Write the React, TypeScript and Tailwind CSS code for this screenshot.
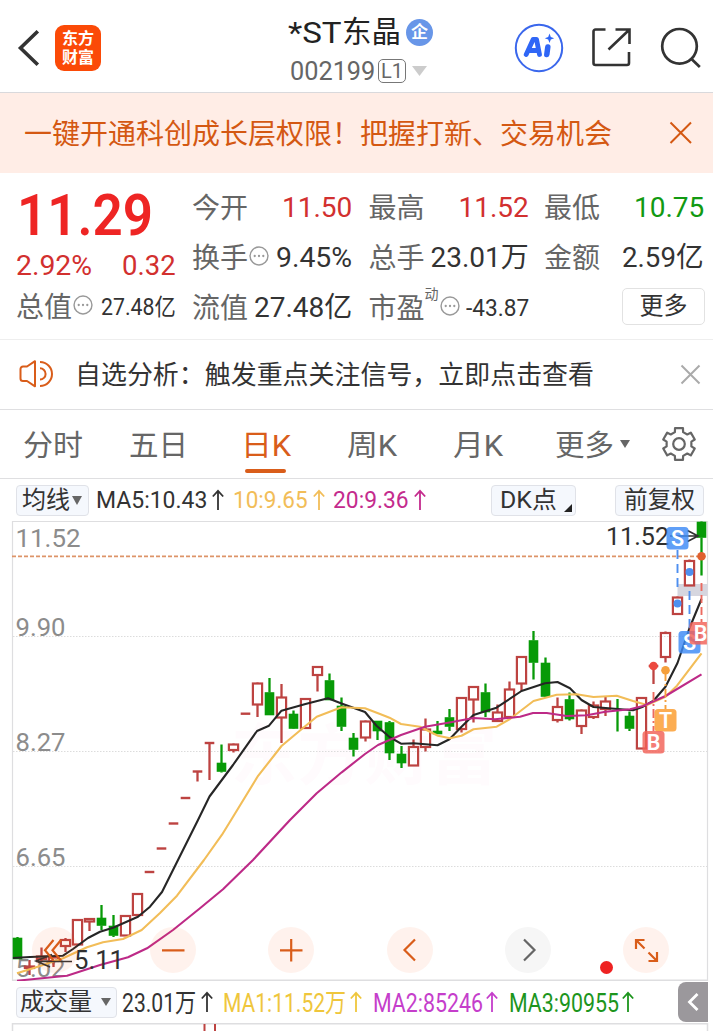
import { useLayoutEffect, useRef, type ReactNode } from "react";

/** Single line of text condensed or stretched to the width of its box. */
function Fit({ className, children }: { className: string; children: ReactNode }) {
  const box = useRef<HTMLDivElement>(null);
  const text = useRef<HTMLSpanElement>(null);
  useLayoutEffect(() => {
    if (!box.current || !text.current) return;
    const scale = box.current.clientWidth / text.current.offsetWidth;
    text.current.style.transform = `scaleX(${scale})`;
  }, []);
  return (
    <div ref={box} className={`flex shrink-0 leading-none whitespace-nowrap ${className}`}>
      <span ref={text} className="inline-block shrink-0 origin-left">
        {children}
      </span>
    </div>
  );
}

function More() {
  return (
    <svg className="mb-[3px] ml-px shrink-0" width="20" height="20" viewBox="0 0 21 21" fill="none">
      <circle cx="10.5" cy="10.5" r="9.4" stroke="#999" strokeWidth="1.5" />
      <circle cx="6" cy="10.5" r="1.2" fill="#999" />
      <circle cx="10.5" cy="10.5" r="1.2" fill="#999" />
      <circle cx="15" cy="10.5" r="1.2" fill="#999" />
    </svg>
  );
}

function Up({ className }: { className: string }) {
  return (
    <svg className={`shrink-0 ${className}`} width="12" height="22" viewBox="0 0 12 22" fill="none" stroke="currentColor" strokeWidth="1.8">
      <path d="M6 21V1.500M0.800 7.500L6 1.800l5.200 5.700" />
    </svg>
  );
}

function Down({ className, w, h }: { className: string; w: number; h: number }) {
  return (
    <svg className={`shrink-0 ${className}`} width={w} height={h} viewBox="0 0 10 8" preserveAspectRatio="none" fill="currentColor">
      <path d="M0 0h10L5 8z" />
    </svg>
  );
}

/** Outline of a six-toothed cog centred on (18, 18). */
const cog = Array.from({ length: 6 }, (_, i) => i * 60 - 90)
  .flatMap((a) => [
    [a - 19, 12.6],
    [a - 14, 16.4],
    [a + 14, 16.4],
    [a + 19, 12.6],
  ])
  .map(([deg, r]) => {
    const t = (deg * Math.PI) / 180;
    return `${(18 + r * Math.cos(t)).toFixed(2)},${(18 + r * Math.sin(t)).toFixed(2)}`;
  })
  .join(" ");

type Candle = [kind: "r" | "g", high: number, top: number, bottom: number, low: number];

const candles: Candle[] = [
  ["g", 937, 938, 959, 959],
  ["r", 960, 966, 968, 975],
  ["r", 947.5, 956, 959, 961],
  ["r", 956, 957, 961, 967],
  ["r", 938, 939.5, 946, 952],
  ["r", 919, 919.5, 944.5, 945],
  ["r", 918, 918.5, 921.5, 931],
  ["g", 905, 918, 925.5, 930],
  ["g", 915, 926, 935.5, 937],
  ["r", 915, 915.5, 935.5, 936],
  ["r", 893, 893.5, 915, 915],
  ["r", 872, 872, 872, 872],
  ["r", 848.5, 848.5, 848.5, 848.5],
  ["r", 823.5, 823.5, 823.5, 823.5],
  ["r", 798, 798, 798, 798],
  ["r", 771, 771.5, 771.5, 781.5],
  ["r", 743, 743, 743, 780],
  ["g", 744.5, 763, 771.5, 772.5],
  ["r", 743.5, 744, 750, 752.5],
  ["r", 713.7, 713.7, 713.7, 713.7],
  ["r", 682.5, 683, 704.5, 717],
  ["g", 678, 692.5, 715, 715],
  ["r", 684, 697, 717.5, 743],
  ["g", 710.5, 714, 728.5, 729],
  ["r", 698, 698.5, 728, 728],
  ["r", 666, 666.5, 675, 691.5],
  ["g", 673.5, 680.5, 700, 700],
  ["g", 697.5, 706, 726.5, 731],
  ["g", 733, 738, 749.5, 756.5],
  ["r", 720.5, 721, 737.5, 741.5],
  ["g", 721, 721, 731, 740],
  ["g", 721, 722.5, 753, 760],
  ["g", 746, 754, 763, 768],
  ["r", 739.5, 746.5, 765.5, 765.5],
  ["r", 718.5, 729, 747, 751.5],
  ["g", 721, 731, 734, 734],
  ["g", 709, 717.5, 726.5, 731],
  ["r", 697, 697.5, 729, 732.5],
  ["r", 686, 686.5, 699.5, 722.5],
  ["g", 683.5, 692.5, 712, 717],
  ["r", 704.5, 712, 721, 722],
  ["r", 681.5, 689, 717, 717],
  ["r", 656, 656.5, 683.5, 691],
  ["g", 631, 640.5, 662.5, 679.5],
  ["g", 657.5, 663, 696.5, 697],
  ["r", 697.5, 706.5, 720, 722.5],
  ["g", 692.5, 699.5, 719, 720.5],
  ["r", 709.5, 710, 726, 734],
  ["r", 701.5, 705, 717, 719],
  ["r", 697, 701, 709, 716],
  ["g", 699, 715, 715, 731.5],
  ["g", 711.5, 716, 728.5, 731],
  ["r", 697, 697.5, 748.5, 749],
  ["r", 666, 666, 666, 684],
  ["r", 631.5, 632.5, 657, 662.5],
  ["r", 596.5, 597, 614, 614.5],
  ["r", 559.5, 560.5, 585.5, 586],
  ["g", 521.5, 522, 537.5, 575.5],
];

const ma5 =
  "13,958 30,957 63,955.7 73,949 88,938 100,931.7 113,927.7 138,916.7 150,906.7 162,892 178,860 198,820 209.5,796.5 233,765 257,731 269,725.7 281.5,710.7 305.5,704 328,698.3 341.5,703.5 365,712 376.5,725.7 389.5,737 401,743.7 413.5,743.3 437.5,745.3 449.5,739.3 461.5,726.7 473.5,715 496.5,707.7 521.5,691 545,683.3 557.5,682 570,688.3 581.5,700 593.5,707 633,710.3 643,706.7 653.5,700.7 665.5,686.7 677.5,663 689.5,628 701.5,599";
const ma10 =
  "17,973.3 40,966 63,958.3 87,947.3 103,942.3 123,939 141.7,930 160,913 177,895.7 204,860 222,834.7 231.7,819 257.5,776.7 281.5,746 303,728 316.7,716.7 341.5,707.3 365,708.3 380,714 389.5,717.7 401,724 420,726.7 430,731.7 438,735.7 450,738.3 461.5,735.7 473.5,729.3 496.7,726.7 510,719 533.5,701 556.7,694.7 576.7,694.3 593.5,697 616.7,695.7 633,701 647,705 665.5,696.7 677,685.7 701.5,653.3";
const ma20 =
  "17,980.7 67,975.7 100,965 128,957.3 147,948.3 173,930 200,908.3 223,889.3 253,860 290,820 316.7,793.3 341.7,772.3 365,754 378,745 401,735 425,726.7 449.5,722.5 473.5,718 495,719.3 520,716.7 533,713 546.7,713 566.7,716 586.7,715.3 605.5,711.7 630,709.3 643,706 665.5,696 701.5,674.3";

const axis: [string, number, number][] = [
  ["11.52", 547, 65],
  ["9.90", 636, 50],
  ["8.27", 751, 50],
  ["6.65", 866, 50],
  ["5.02", 977, 50],
];

function Mark({ x, y, letter, fill }: { x: number; y: number; letter: string; fill: string }) {
  return (
    <g>
      <rect x={x} y={y} width="22" height="22.5" rx="3.5" fill={fill} fillOpacity="0.82" />
      <text x={x + 11} y={y + 18.8} textAnchor="middle" fontSize="21.5" fontWeight="600" fill="#fff">
        {letter}
      </text>
    </g>
  );
}

function KLine() {
  return (
    <svg className="block" width="713" height="461" viewBox="0 520 713 461" fontFamily="Roboto, 'Noto Sans CJK SC', sans-serif">
      <text x="231" y="779" fontSize="66" fontWeight="700" textLength="266" fill="#fffbfd">
        东方财富
      </text>
      <path d="M12.5 981V521.5H707.5V981" fill="none" stroke="#dedee0" strokeWidth="1.2" />
      <path d="M12 980.2H708" stroke="#dedee0" strokeWidth="1.5" />
      <path d="M13 636.5H707M13 751.5H707M13 866.5H707" stroke="#dcdcdc" strokeWidth="1" strokeDasharray="1.5 1.5" />
      <rect x="677.5" y="584" width="30" height="12" fill="#d6d6df" />
      {axis.map(([label, y, w]) => (
        <text key={label} x="15.5" y={y} fontSize="26.5" textLength={w} lengthAdjust="spacingAndGlyphs" fill="#8c8c8c">
          {label}
        </text>
      ))}
      <path d="M12 556.3H702" stroke="#dd9468" strokeWidth="1.8" strokeDasharray="4 2" />
      {candles.map(([kind, high, top, bottom, low], i) => {
        const x = 17.5 + i * 12;
        const color = kind === "r" ? "#bd4341" : "#079a07";
        const flat = bottom - top < 1;
        const thin = kind === "g" && flat;
        return (
          <g key={i} stroke={color} strokeWidth="2.3" fill="none">
            {high < top && <path d={`M${x} ${high}V${top}`} />}
            {low > bottom && <path d={`M${x} ${bottom}V${low}`} />}
            {flat && !thin && <path d={`M${x - 4.8} ${top}h9.6`} strokeWidth="2.4" />}
            {!flat && kind === "r" && (
              <rect x={x - 4.6} y={top + 0.5} width="9.2" height={Math.max(bottom - top - 0.5, 0.5)} strokeWidth="2.2" />
            )}
            {!flat && kind === "g" && <rect x={x - 4.8} y={top - 0.3} width="9.6" height={bottom - top + 0.6} fill={color} stroke="none" />}
          </g>
        );
      })}
      <g fill="none" strokeWidth="2.1" strokeLinejoin="round">
        <polyline points={ma5} stroke="#262626" />
        <polyline points={ma10} stroke="#f2bd58" />
        <polyline points={ma20} stroke="#bd2a87" />
      </g>
      <text x="606" y="545.3" fontSize="26.5" textLength="63" lengthAdjust="spacingAndGlyphs" fill="#303030">
        11.52
      </text>
      <path d="M670 536H698M687.5 530.5L698 536L687.5 541.5" fill="none" stroke="#303030" strokeWidth="1.7" />
      <g fill="none" strokeWidth="1.9">
        <path d="M677.5 550V589" stroke="#4e8ff0" strokeDasharray="9 5" />
        <path d="M689.5 591V631" stroke="#4e8ff0" strokeDasharray="9 5" />
        <path d="M701.5 583V622" stroke="#ec6a60" strokeDasharray="8 4" />
        <path d="M653.5 692V731" stroke="#ec6a60" strokeDasharray="9 3 2 3" />
        <path d="M665.5 673V709" stroke="#f5a03c" strokeDasharray="8 3 2 3" />
      </g>
      <circle cx="701.5" cy="556.3" r="4.3" fill="#e0602f" />
      <circle cx="689.5" cy="572" r="4" fill="#4e8ff0" />
      <circle cx="677.5" cy="603.5" r="4" fill="#4e8ff0" />
      <circle cx="665.5" cy="670.3" r="4.3" fill="#f5a03c" />
      <circle cx="653.5" cy="666" r="4.3" fill="#ec4a40" />
      <Mark x={666.5} y={527} letter="S" fill="#3d8af5" />
      <Mark x={678.5} y={631} letter="S" fill="#3d8af5" />
      <Mark x={689.5} y={622} letter="B" fill="#f26057" />
      <Mark x={654.5} y={709} letter="T" fill="#fb9b2c" />
      <Mark x={642.5} y={731} letter="B" fill="#f26057" />
      <path d="M72 961.5H36M52 954.5L36 961L50 967" fill="none" stroke="#303030" strokeWidth="1.6" />
      <text x="74" y="969.3" fontSize="26" textLength="50" lengthAdjust="spacingAndGlyphs" fill="#303030">
        5.11
      </text>
      <rect x="708" y="600" width="5" height="60" fill="#fff" />
      <path d="M707.5 600V660" stroke="#dedee0" strokeWidth="1.2" />
    </svg>
  );
}

const tools: [string, string][] = [
  ["M21.5 13L13 23.2L21.5 33.5M29 13L20.5 23.2L29 33.5", "orange"],
  ["M12 23.3H34.5", "orange"],
  ["M12 23.3H34.5M23.2 12V34.5", "orange"],
  ["M28 12.5L17.5 23L28 33.5", "orange"],
  ["M19 12.5L29.5 23L19 33.5", "gray"],
  ["M21.5 13H13V22M13 13L21.5 21.5M25.5 25.5L34 34M34 25V34H25.5", "orange"],
];

function ChartTools() {
  return (
    <div className="absolute top-[407px] left-[32px] flex gap-[72.2px]">
      {tools.map(([d, tone]) => (
        <svg
          key={d}
          className={tone === "gray" ? "shrink-0 rounded-full bg-[#f6f6f6] text-[#666]" : "shrink-0 rounded-full bg-[#fa5a1e]/8 text-[#d95d1a]"}
          width="46"
          height="46"
          viewBox="0 0 46 46"
          fill="none"
          stroke="currentColor"
          strokeWidth="2.2"
        >
          <path d={d} />
        </svg>
      ))}
    </div>
  );
}

const label = "w-[56px] pt-[3px] text-[28px] text-[#666]";

export default function App() {
  return (
    <div className="flex h-[1031px] w-[713px] flex-col overflow-hidden bg-white font-[Roboto,'Noto_Sans_CJK_SC',sans-serif] leading-none text-[#333]">
      <header className="flex h-[93px] shrink-0 items-start border-b border-[#d9d9dc]">
        <svg className="mt-[29px] ml-[17px]" width="24" height="38" viewBox="0 0 24 38" fill="none" stroke="#333" strokeWidth="3.6">
          <path d="M20.8 2.2L3.5 19L20.8 35.8" />
        </svg>
        <div className="mt-[25px] ml-[14px] flex size-[46px] shrink-0 flex-col items-center justify-center rounded-[9px] bg-[#fb4a07] text-[16px] leading-[19px] font-bold text-white">
          <span>东方</span>
          <span>财富</span>
        </div>
        <div className="ml-[187px] flex w-[145px] shrink-0 flex-col">
          <div className="mt-[16px] flex h-8 items-center">
            <Fit className="w-[54px] pt-[2px] text-[30px] text-[#222]">*ST</Fit>
            <span className="pt-[2px] text-[29.5px] leading-none text-[#222]">东晶</span>
            <span className="ml-[5px] flex size-[27px] items-center justify-center rounded-full bg-[#6896e8] text-[17px] leading-none font-bold text-white">企</span>
          </div>
          <div className="mt-[9px] flex h-[27px] items-center">
            <Fit className="ml-[2px] w-[85px] pt-px text-[25px] text-[#666]">002199</Fit>
            <div className="ml-[3px] flex h-[24px] w-[28px] shrink-0 items-center justify-center rounded-[5px] border-[1.5px] border-[#777] text-[20px] text-[#666]">L1</div>
            <Down className="ml-[6px] text-[#ccc]" w={15} h={10} />
          </div>
        </div>
        <svg className="mt-[23px] ml-[80.5px] shrink-0" width="50" height="50" viewBox="0 0 50 50">
          <circle cx="25" cy="25" r="23.2" fill="none" stroke="#3a67ec" strokeWidth="2" />
          <g fill="none" stroke="#2f66f6" strokeLinejoin="round" strokeLinecap="round">
            <path d="M12.2 31.5L19.2 16.3L22.5 16.3L25.5 31.5M15.5 27.500H24" strokeWidth="4.8" />
            <path d="M33.8 24L32.8 31.500" strokeWidth="5.5" />
          </g>
          <path d="M35.5 10.500l1.300 3.400 3.400 1.300-3.400 1.300-1.300 3.400-1.300-3.400-3.400-1.300 3.400-1.300z" fill="#2f66f6" />
        </svg>
        <svg className="mt-[27px] ml-[27px] shrink-0" width="42" height="42" viewBox="0 0 42 42" fill="none" stroke="#333" strokeWidth="2.6">
          <path d="M14.5 2.5H4.5a2 2 0 0 0-2 2V36a2 2 0 0 0 2 2H36a2 2 0 0 0 2-2V25M24.5 2.5H38.500V17M38 3L17.500 22.500" />
        </svg>
        <svg className="mt-[26px] ml-[26px] shrink-0" width="44" height="44" viewBox="0 0 44 44" fill="none" stroke="#333" strokeWidth="2.7">
          <circle cx="20.500" cy="20.3" r="17.3" />
          <path d="M32 32.500L40.800 41" />
        </svg>
      </header>

      <section className="flex h-[80px] shrink-0 items-center bg-[#ffede6] pl-[24px] text-[#d45812]">
        <Fit className="w-[588px] pt-[4px] text-[28px]">一键开通科创成长层权限！把握打新、交易机会</Fit>
        <svg className="ml-[56.5px]" width="24" height="24" viewBox="0 0 24 24" fill="none" stroke="currentColor" strokeWidth="2">
          <path d="M1.500 1.500L22 22M22 1.500L1.500 22" />
        </svg>
      </section>

      <section className="flex h-[167px] shrink-0 border-b border-[#eee] pt-[9px] pl-[16px]">
        <div className="flex w-[160px] flex-col">
          <div className="flex h-[65px] items-center">
            <Fit className="ml-[1px] w-[136px] text-[58px] font-semibold text-[#ee2524]">11.29</Fit>
          </div>
          <div className="flex h-[36px] items-center justify-between pt-[2px] text-[28px] text-[#d2302f]">
            <Fit className="w-[76px]">2.92%</Fit>
            <Fit className="w-[54px]">0.32</Fit>
          </div>
          <div className="flex h-[47px] items-center">
            <Fit className={label}>总值</Fit>
            <More />
            <Fit className="ml-[8px] w-[75px] pt-[2px] text-[23px]">27.48亿</Fit>
          </div>
        </div>
        <div className="ml-[16px] flex w-[160px] flex-col">
          <div className="flex h-[50px] items-center justify-between">
            <Fit className={label}>今开</Fit>
            <Fit className="w-[70px] pt-[2px] text-[28px] text-[#d2302f]">11.50</Fit>
          </div>
          <div className="flex h-[50px] items-center">
            <Fit className={label}>换手</Fit>
            <More />
            <Fit className="ml-[7px] w-[76px] pt-[2px] text-[28px]">9.45%</Fit>
          </div>
          <div className="flex h-[50px] items-center justify-between">
            <Fit className={label}>流值</Fit>
            <Fit className="w-[98px] pt-[2px] text-[28px]">27.48亿</Fit>
          </div>
        </div>
        <div className="ml-[16.5px] flex w-[160px] flex-col">
          <div className="flex h-[50px] items-center justify-between">
            <Fit className={label}>最高</Fit>
            <Fit className="w-[70px] pt-[2px] text-[28px] text-[#d2302f]">11.52</Fit>
          </div>
          <div className="flex h-[50px] items-center justify-between">
            <Fit className={label}>总手</Fit>
            <Fit className="w-[98px] pt-[2px] text-[28px]">23.01万</Fit>
          </div>
          <div className="flex h-[50px] items-center">
            <Fit className={label}>市盈</Fit>
            <span className="mb-[26px] text-[14px] text-[#666]">动</span>
            <More />
            <Fit className="ml-[6px] w-[63px] pt-[2px] text-[23px]">-43.87</Fit>
          </div>
        </div>
        <div className="ml-[15.5px] flex w-[160px] flex-col">
          <div className="flex h-[50px] items-center justify-between">
            <Fit className={label}>最低</Fit>
            <Fit className="w-[70px] pt-[2px] text-[28px] text-[#129a12]">10.75</Fit>
          </div>
          <div className="flex h-[50px] items-center justify-between">
            <Fit className={label}>金额</Fit>
            <Fit className="w-[82px] pt-[2px] text-[28px]">2.59亿</Fit>
          </div>
          <div className="mt-[6px] mr-[-1px] flex h-[37px] w-[83px] items-center justify-center self-end rounded-[5px] border border-[#e2e2e2] pb-[2px] text-[24px]">更多</div>
        </div>
      </section>

      <section className="flex h-[70px] shrink-0 items-center border-b border-[#dfdfe1] pl-[19px]">
        <svg className="mb-px" width="36" height="30" viewBox="0 0 36 30" fill="none" stroke="#d95d1a" strokeWidth="2">
          <path d="M16 2.200V27.300L8 22H4a2.500 2.500 0 0 1-2.500-2.500V10A2.500 2.500 0 0 1 4 7.500H8Z" strokeLinejoin="round" />
          <path d="M21 9.300a5.600 5.600 0 0 1 0 11.200M21 3a12 12 0 0 1 0 24" />
        </svg>
        <Fit className="ml-[20px] w-[519px] text-[26px]">自选分析：触发重点关注信号，立即点击查看</Fit>
        <svg className="ml-[86px]" width="21" height="21" viewBox="0 0 21 21" fill="none" stroke="#aaa" strokeWidth="2">
          <path d="M1.500 1.500L19.500 19.500M19.500 1.500L1.500 19.500" />
        </svg>
      </section>

      <nav className="flex h-[69px] shrink-0 items-center border-b border-[#dfdfe1] pl-[23px] text-[29px] text-[#666]">
        <Fit className="w-[60px] pt-[4px]">分时</Fit>
        <Fit className="ml-[46px] w-[59px] pt-[4px]">五日</Fit>
        <div className="relative ml-[53px] flex h-full w-[50px] items-center text-[#d95d1a]">
          <Fit className="w-[50px] pt-[4px]">日K</Fit>
          <span className="absolute bottom-[5px] left-[4px] h-[4px] w-[41px] rounded-full bg-[#d95d1a]" />
        </div>
        <Fit className="ml-[56px] w-[50px] pt-[4px]">周K</Fit>
        <Fit className="ml-[56px] w-[50px] pt-[4px]">月K</Fit>
        <Fit className="ml-[52px] w-[59px] pt-[4px]">更多</Fit>
        <Down className="ml-[6px]" w={10} h={8} />
        <svg className="ml-[31px] shrink-0" width="36" height="36" viewBox="0 0 36 36" fill="none" stroke="#666" strokeWidth="2.2" strokeLinejoin="round">
          <polygon points={cog} />
          <circle cx="18" cy="18" r="5.800" />
        </svg>
      </nav>

      <div className="flex h-[41px] shrink-0 items-center pl-[16px] text-[24px]">
        <div className="mt-[1px] flex h-[31px] w-[73px] items-center rounded-[4px] border border-[#e0e2e8] bg-[#f5f8fd] pl-[5px]">
          <Fit className="w-[48px]">均线</Fit>
          <Down className="ml-[2px] text-[#666]" w={10} h={9} />
        </div>
        <Fit className="ml-[7px] w-[111px] pt-px">MA5:10.43</Fit>
        <Up className="ml-[5px]" />
        <Fit className="ml-[9px] w-[75px] pt-px text-[#f2bd58]">10:9.65</Fit>
        <Up className="ml-[5px] text-[#f2bd58]" />
        <Fit className="ml-[8px] w-[76px] pt-px text-[#c42b8d]">20:9.36</Fit>
        <Up className="ml-[5px] text-[#c42b8d]" />
        <div className="mt-[1px] ml-[65px] flex h-[31px] w-[85px] items-center rounded-[4px] border border-[#e0e2e8] bg-[#f5f8fd] pl-[8px]">
          <Fit className="w-[57px]">DK点</Fit>
          <svg className="mt-[15px] ml-[7px]" width="8" height="8" viewBox="0 0 8 8">
            <path d="M8 0V8H0z" fill="#222" />
          </svg>
        </div>
        <div className="mt-[1px] ml-[39px] flex h-[31px] w-[89px] items-center justify-center rounded-[4px] border border-[#e0e2e8] bg-[#f5f8fd]">
          <Fit className="w-[71px]">前复权</Fit>
        </div>
      </div>

      <div className="relative shrink-0">
        <KLine />
        <ChartTools />
        <span className="absolute top-[441px] left-[600px] size-[12.5px] rounded-full bg-[#ee2222]" />
      </div>

      <div className="flex h-[42px] shrink-0 items-center pl-[16px] text-[26px]">
        <div className="flex h-[31px] w-[101px] items-center rounded-[4px] border border-[#e0e2e8] bg-[#f5f8fd] pl-[3px]">
          <Fit className="w-[72px] text-[24px]">成交量</Fit>
          <Down className="ml-[9px] text-[#666]" w={10} h={8} />
        </div>
        <Fit className="ml-[5px] w-[74px] pt-px">23.01万</Fit>
        <Up className="ml-[5px]" />
        <Fit className="ml-[10px] w-[123px] pt-px text-[#efc63c]">MA1:11.52万</Fit>
        <Up className="ml-[4px] text-[#efc63c]" />
        <Fit className="ml-[11px] w-[110px] pt-px text-[#c53ecb]">MA2:85246</Fit>
        <Up className="ml-[3px] text-[#c53ecb]" />
        <Fit className="ml-[11px] w-[110px] pt-px text-[#1d951d]">MA3:90955</Fit>
        <Up className="ml-[3px] text-[#1d951d]" />
        <div className="ml-[44px] flex h-[40px] w-[30px] items-center justify-center rounded-l-[8px] bg-[#9b989c]">
          <svg width="12" height="20" viewBox="0 0 12 20" fill="none" stroke="#fff" strokeWidth="2.8">
            <path d="M10.500 2L2.500 10L10.500 18" />
          </svg>
        </div>
      </div>

      <svg className="block shrink-0" width="713" height="8" viewBox="0 0 713 8" fill="none">
        <path d="M12.500 8V0.800H707.500V8" stroke="#dedee0" strokeWidth="1.5" />
        <path d="M204.500 1V8M215 1V8" stroke="#bd4341" strokeWidth="2" />
      </svg>
    </div>
  );
}
